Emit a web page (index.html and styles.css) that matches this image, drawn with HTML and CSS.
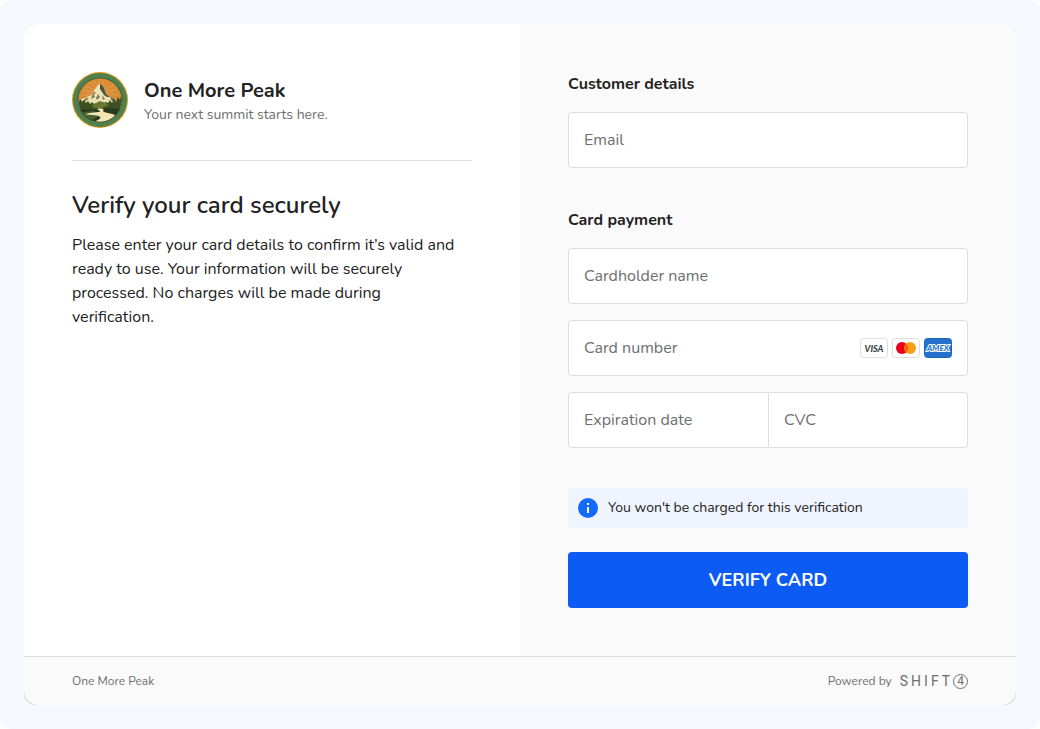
FILE: index.html
```html
<!DOCTYPE html>
<html lang="en">
<head>
    <meta charset="UTF-8">
    <meta name="viewport" content="width=device-width, initial-scale=1.0">
    <title>One More Peak</title>
    <link rel="stylesheet" href="styles.css">
</head>
<body>

<div class="page">
    <div class="checkout">
        <main class="columns">
            <section class="summary">
                <header class="merchant">
                    <svg class="merchant-logo" viewBox="0 0 56 56" aria-hidden="true">
                        <defs>
                            <clipPath id="badge"><circle cx="28" cy="28" r="21.7"/></clipPath>
                        </defs>
                        <circle cx="28" cy="28" r="28" fill="#e19a12"/>
                        <circle cx="28" cy="28" r="27" fill="#4f8052"/>
                        <circle cx="28" cy="28" r="22.4" fill="#37562f"/>
                        <g clip-path="url(#badge)">
                            <rect width="56" height="56" fill="#d98a35"/>
                            <!-- sun rays -->
                            <path d="M28 20L27 7M28 20L32 8M28 20L37 9M28 20L42 13M28 20L45 18M28 20L46 23M28 20L22 8M28 20L17 10M28 20L13 14M28 20L11 19M28 20L10 24" stroke="#efbd72" stroke-width=".4"/>
                            <!-- mountain -->
                            <path d="M4 31L9 27L13 26L17 24L20 23L23 17L26 13L28 12L30 13L32 16L34 22L38 25L41 26L44 29L52 31V36H4Z" fill="#ece2b4"/>
                            <path d="M28 12L30 13L32 16L34 22L38 25L35 25L32 23L30 20L28 17Z" fill="#4b543a"/>
                            <path d="M22 20L24 20L22 23L23 25L19 27L20 24ZM14 26L17 26L14 29L10 30ZM26 22L28 25L25 28L24 26ZM30 23L33 27L31 28Z" fill="#7b7b58"/>
                            <path d="M38 25L41 26L44 29L40 29Z" fill="#5d6245"/>
                            <!-- forest -->
                            <path d="M4 28L6 26L7 29L9 27L10 30L12 28L14 31L16 29L18 32L20 30L22 32L26 31L30 32L34 30L36 31L38 28L40 31L42 27L44 30L46 25L48 28L49 24L52 29V56H4Z" fill="#3c5024"/>
                            <path d="M20 33L24 31L28 29L34 31L37 33L30 36L22 36Z" fill="#66782b"/>
                            <path d="M4 39C14 36 20 39 28 37C38 35 44 38 52 36V56H4Z" fill="#2a381b"/>
                            <path d="M4 42C12 39 16 40 21 39L31 42L18 49Z" fill="#4c5f31"/>
                            <!-- trail -->
                            <path d="M25 37C29 36 33 37 31 39C31 41 43 41 43 44C43 47 38 48 35 51H19C24 49 30 47 28 45C26 42 12 44 14 42C18 40 29 41 28 39Z" fill="#f2e6b5"/>
                        </g>
                    </svg>
                    <div class="merchant-info">
                        <h1 class="merchant-name">One More Peak</h1>
                        <p class="merchant-tagline">Your next summit starts here.</p>
                    </div>
                </header>
                <h2 class="title">Verify your card securely</h2>
                <p class="description">Please enter your card details to confirm it’s valid and ready to use. Your information will be securely processed. No charges will be made during verification.</p>
            </section>

            <form class="payment">
                <h3 class="group-title">Customer details</h3>
                <div class="form-group">
                    <input class="field" type="email" id="email" name="email" placeholder="Email" aria-label="Email">
                </div>

                <h3 class="group-title">Card payment</h3>
                <div class="form-group">
                    <input class="field" type="text" id="cardholder" name="cardholder" placeholder="Cardholder name" aria-label="Cardholder name">
                    <div class="field card-number">
                        <input class="field-input" type="text" id="cardNumber" name="cardNumber" placeholder="Card number" aria-label="Card number">
                        <div class="brands">
                            <svg width="28" height="20" viewBox="0 0 28 20" role="img" aria-label="Visa">
                                <rect x=".5" y=".5" width="27" height="19" rx="3" fill="#fff" stroke="#dcdee0"/>
                                <text class="visa" x="14" y="14" text-anchor="middle">VISA</text>
                            </svg>
                            <svg width="28" height="20" viewBox="0 0 28 20" role="img" aria-label="Mastercard">
                                <rect x=".5" y=".5" width="27" height="19" rx="3" fill="#fff" stroke="#dcdee0"/>
                                <circle cx="10" cy="10" r="6" fill="#eb001b"/>
                                <circle cx="18" cy="10" r="6" fill="#f79e1b"/>
                                <path d="M14 5.5a6 6 0 0 1 0 9a6 6 0 0 1 0-9z" fill="#ff5f00"/>
                            </svg>
                            <svg width="28" height="20" viewBox="0 0 28 20" role="img" aria-label="American Express">
                                <rect x=".5" y=".5" width="27" height="19" rx="3" fill="#2671cc" stroke="#1b62b7"/>
                                <text class="amex" x="14" y="13" text-anchor="middle">AMEX</text>
                            </svg>
                        </div>
                    </div>
                    <div class="field-pair">
                        <input class="field" type="text" id="expiry" name="expiry" placeholder="Expiration date" aria-label="Expiration date">
                        <input class="field" type="text" id="cvc" name="cvc" placeholder="CVC" aria-label="CVC">
                    </div>
                </div>

                <p class="notice">
                    <svg width="20" height="20" viewBox="0 0 20 20" aria-hidden="true">
                        <circle cx="10" cy="10" r="10" fill="#126bfb"/>
                        <path d="M9 5h2v2H9zM9 9h2v6H9z" fill="#fff"/>
                    </svg>
                    You won't be charged for this verification
                </p>
                <button class="submit" type="submit">VERIFY CARD</button>
            </form>
        </main>

        <footer class="footer">
            <span>One More Peak</span>
            <a class="powered" href="#">Powered by
                <span class="wordmark"><span>S</span><span>H</span><span>I</span><span>F</span><span>T</span><span class="four">4</span></span>
            </a>
        </footer>
    </div>
</div>

</body>
</html>
```
FILE: styles.css
```css
* {
    box-sizing: border-box;
}
body {
    margin: 0;
    background-color: #fff;
    color: #222;
    font-family: Nunito, Lato, sans-serif;
    font-size: 16px;
    line-height: 24px;
}
h1, h2, h3, p {
    margin: 0;
}
.page {
    min-height: 100vh;
    padding: 24px;
    background-color: #f5f8ff;
    border-radius: 12px;
}
.checkout {
    background-color: #ccc;
    border-radius: 12px;
    overflow: hidden;
}
.columns {
    display: grid;
    grid-template-columns: 1fr 1fr;
}
.summary {
    padding: 48px;
    background-color: #fff;
}
.merchant {
    display: flex;
    align-items: center;
    gap: 16px;
    padding-bottom: 32px;
    margin-bottom: 28px;
    border-bottom: 1px solid #dedede;
}
.merchant-logo {
    width: 56px;
    height: 56px;
    flex: none;
}
.merchant-info {
    padding-top: 2px;
}
.merchant-name {
    font-size: 20px;
    line-height: 28px;
    font-weight: 700;
}
.merchant-tagline {
    font-size: 14px;
    line-height: 20px;
    color: #6e6e6e;
}
.title {
    margin-bottom: 12px;
    font-size: 24px;
    line-height: 32px;
    font-weight: 600;
}
.description {
    padding-right: 8px;
}

/* form */
.payment {
    padding: 48px;
    background-color: #fafafa;
}
.group-title {
    margin-bottom: 16px;
    font-size: 16px;
    font-weight: 700;
}
.form-group {
    display: grid;
    gap: 16px;
    margin-bottom: 40px;
}
.field {
    width: 100%;
    min-width: 0;
    height: 56px;
    padding: 0 15px;
    border: 1px solid #dedede;
    border-radius: 4px;
    background-color: #fff;
    color: #222;
    font: inherit;
}
.field::placeholder, .field-input::placeholder {
    color: #6e6e6e;
    opacity: 1;
}
.card-number {
    display: flex;
    align-items: center;
    gap: 16px;
}
.field-input {
    flex: 1;
    min-width: 0;
    padding: 0;
    border: 0;
    background: none;
    color: #222;
    font: inherit;
}
.brands {
    display: flex;
    gap: 4px;
}
.visa {
    font: italic 900 9px Lato, sans-serif;
    fill: #3b4248;
}
.amex {
    font: italic 900 8px Lato, sans-serif;
    fill: #2671cc;
    stroke: #fff;
    stroke-width: 2px;
    paint-order: stroke;
}
.field-pair {
    display: grid;
    grid-template-columns: 201fr 199fr;
}
.field-pair .field:first-child {
    border-radius: 4px 0 0 4px;
}
.field-pair .field:last-child {
    border-left: 0;
    border-radius: 0 4px 4px 0;
}
.notice {
    display: flex;
    align-items: center;
    gap: 10px;
    padding: 10px;
    margin-bottom: 24px;
    border-radius: 4px;
    background-color: #f0f4ff;
    font-size: 14px;
    line-height: 20px;
}
.submit {
    display: block;
    width: 100%;
    height: 56px;
    border: 0;
    border-radius: 4px;
    background-color: #0d5bf5;
    color: #fff;
    font: inherit;
    font-size: 18px;
    font-weight: 700;
    cursor: pointer;
}

/* footer */
.footer {
    display: flex;
    justify-content: space-between;
    align-items: center;
    padding: 12px 48px;
    border-top: 1px solid #dedede;
    border-radius: 0 0 14px 14px;
    background-color: #fafafa;
    font-size: 12px;
    color: #6e6e6e;
}
.powered {
    display: flex;
    align-items: center;
    gap: 8px;
    color: inherit;
    text-decoration: none;
}
.wordmark {
    display: flex;
    align-items: center;
    gap: 3px;
    font-family: Roboto, sans-serif;
    font-size: 14px;
}
.four {
    width: 15px;
    height: 15px;
    border: 1px solid #6e6e6e;
    border-radius: 50%;
    font-size: 12px;
    line-height: 13px;
    text-align: center;
}
```
